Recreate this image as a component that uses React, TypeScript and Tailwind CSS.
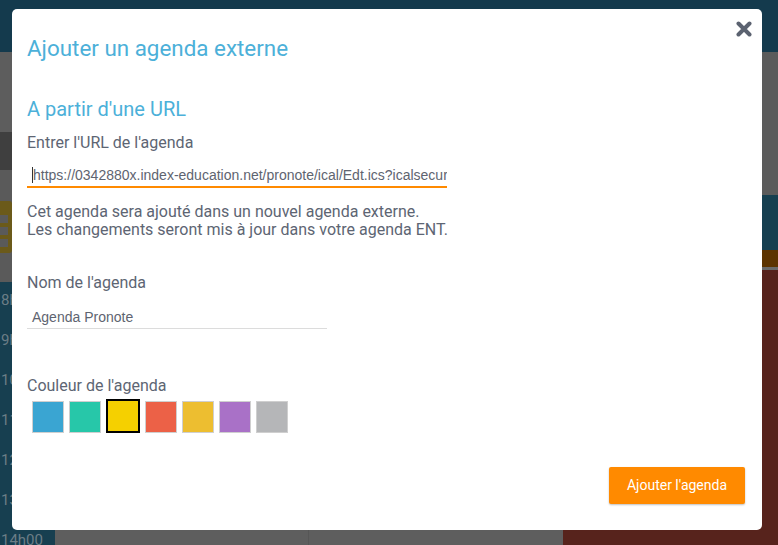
import React from "react";

const swatches = [
  { color: "#3aa5d2", selected: false },
  { color: "#27c7a9", selected: false },
  { color: "#f5d000", selected: true },
  { color: "#ec6147", selected: false },
  { color: "#edbe30", selected: false },
  { color: "#a971c7", selected: false },
  { color: "#b5b6b8", selected: false },
];

const hours = ["8h00", "9h00", "10h00", "11h00", "12h00", "13h00", "14h00"];

function CloseIcon() {
  return (
    <svg width="16" height="16" viewBox="0 0 16 16">
      <path d="M2.5 2.5 L13.5 13.5 M13.5 2.5 L2.5 13.5" stroke="#5b6270" strokeWidth="4" strokeLinecap="round" />
    </svg>
  );
}

function Background() {
  return (
    <div className="flex h-[545px] w-[778px] flex-col overflow-hidden">
      <div className="h-[52px] shrink-0 bg-[#143a4d]" />
      <div className="flex min-h-0 flex-1">
        <div className="flex w-[55px] shrink-0 flex-col">
          <div className="h-[80px] shrink-0 bg-[#5d5d5d]" />
          <div className="h-[38px] shrink-0 bg-[#3f3f3f]" />
          <div className="flex h-[112px] shrink-0 items-center bg-[#5a5a5a]">
            <svg width="14" height="58" viewBox="0 0 14 58">
              <rect x="-10" y="4" width="22" height="52" rx="3" fill="#6b5a1a" />
              <rect x="-4" y="18" width="12" height="8" fill="#5a5a5a" />
              <rect x="-4" y="30" width="12" height="8" fill="#5a5a5a" />
              <rect x="-4" y="42" width="12" height="8" fill="#5a5a5a" />
            </svg>
          </div>
          <div className="flex min-h-0 flex-1 flex-col overflow-hidden bg-[#173f50] pt-[8px] pl-[1px]">
            {hours.map((h) => (
              <div key={h} className="h-[40px] shrink-0 text-[15px] leading-[20px] text-[#6b7d86]">
                {h}
              </div>
            ))}
          </div>
        </div>
        <div className="flex min-w-0 flex-1 flex-col">
          <div className="h-[143px] shrink-0 bg-[#5b5b5b]" />
          <div className="h-[55px] shrink-0 bg-[#163f50]" />
          <div className="h-[17px] shrink-0 bg-[#5c3300]" />
          <div className="h-[3px] shrink-0 bg-[#6a6a6a]" />
          <div className="flex min-h-0 flex-1">
            <div className="w-[253px] bg-[#5e5e5e]" />
            <div className="w-[255px] border-l border-[#565656] bg-[#5e5e5e]" />
            <div className="flex-1 bg-[#57231c]" />
          </div>
        </div>
      </div>
    </div>
  );
}

export default function App() {
  return (
    <div className="relative h-[545px] w-[778px] overflow-hidden" style={{ fontFamily: "Roboto, sans-serif" }}>
      <Background />
      <div className="absolute left-[12px] top-[9px] flex h-[521px] w-[750px] flex-col rounded-[5px] bg-white px-[15px] pt-[26px] pb-[26px]">
        <button className="absolute right-[10px] top-[12px]">
          <CloseIcon />
        </button>
        <h1 className="text-[22.4px] leading-[26px] text-[#4cb0d9]">Ajouter un agenda externe</h1>
        <h2 className="mt-[36px] text-[20px] leading-[24px] text-[#4cb0d9]">A partir d'une URL</h2>
        <label className="mt-[12px] text-[16px] leading-[20px] text-[#5d6573]">Entrer l'URL de l'agenda</label>
        <div className="mt-[11px] h-[24px] w-[420px] overflow-hidden whitespace-nowrap border-b-2 border-[#ff8a00] pl-[5px] text-[14px] leading-[22px] text-[#5e6470]" style={{ fontFamily: "'Liberation Sans', Arial, sans-serif" }}>
          <span className="border-l border-[#333]">https://0342880x.index-education.net/pronote/ical/Edt.ics?icalsecurise=</span>
        </div>
        <p className="mt-[15px] text-[16px] leading-[18px] text-[#5d6573]">
          Cet agenda sera ajouté dans un nouvel agenda externe.
          <br />
          Les changements seront mis à jour dans votre agenda ENT.
        </p>
        <label className="mt-[34px] text-[16px] leading-[20px] text-[#5d6573]">Nom de l'agenda</label>
        <div className="mt-[13px] h-[23px] w-[300px] border-b border-[#dcdcdc] pl-[5px] text-[14px] leading-[22px] text-[#5e6470]" style={{ fontFamily: "'Liberation Sans', Arial, sans-serif" }}>
          Agenda Pronote
        </div>
        <label className="mt-[47px] text-[16px] leading-[20px] text-[#5d6573]">Couleur de l'agenda</label>
        <div className="mt-[3px] flex items-end gap-[5px] pl-[5px]">
          {swatches.map((s) => (
            <div
              key={s.color}
              className={s.selected ? "h-[34px] w-[34px] border-2 border-black" : "h-[32px] w-[32px] border border-[#cfcfcf]"}
              style={{ backgroundColor: s.color }}
            />
          ))}
        </div>
        <div className="mt-auto flex justify-end pr-[2px]">
          <button className="h-[37px] w-[136px] rounded-[2px] bg-[#ff8a00] text-[14px] text-white shadow-[0_1px_2px_rgba(0,0,0,0.25)]">
            Ajouter l'agenda
          </button>
        </div>
      </div>
    </div>
  );
}
